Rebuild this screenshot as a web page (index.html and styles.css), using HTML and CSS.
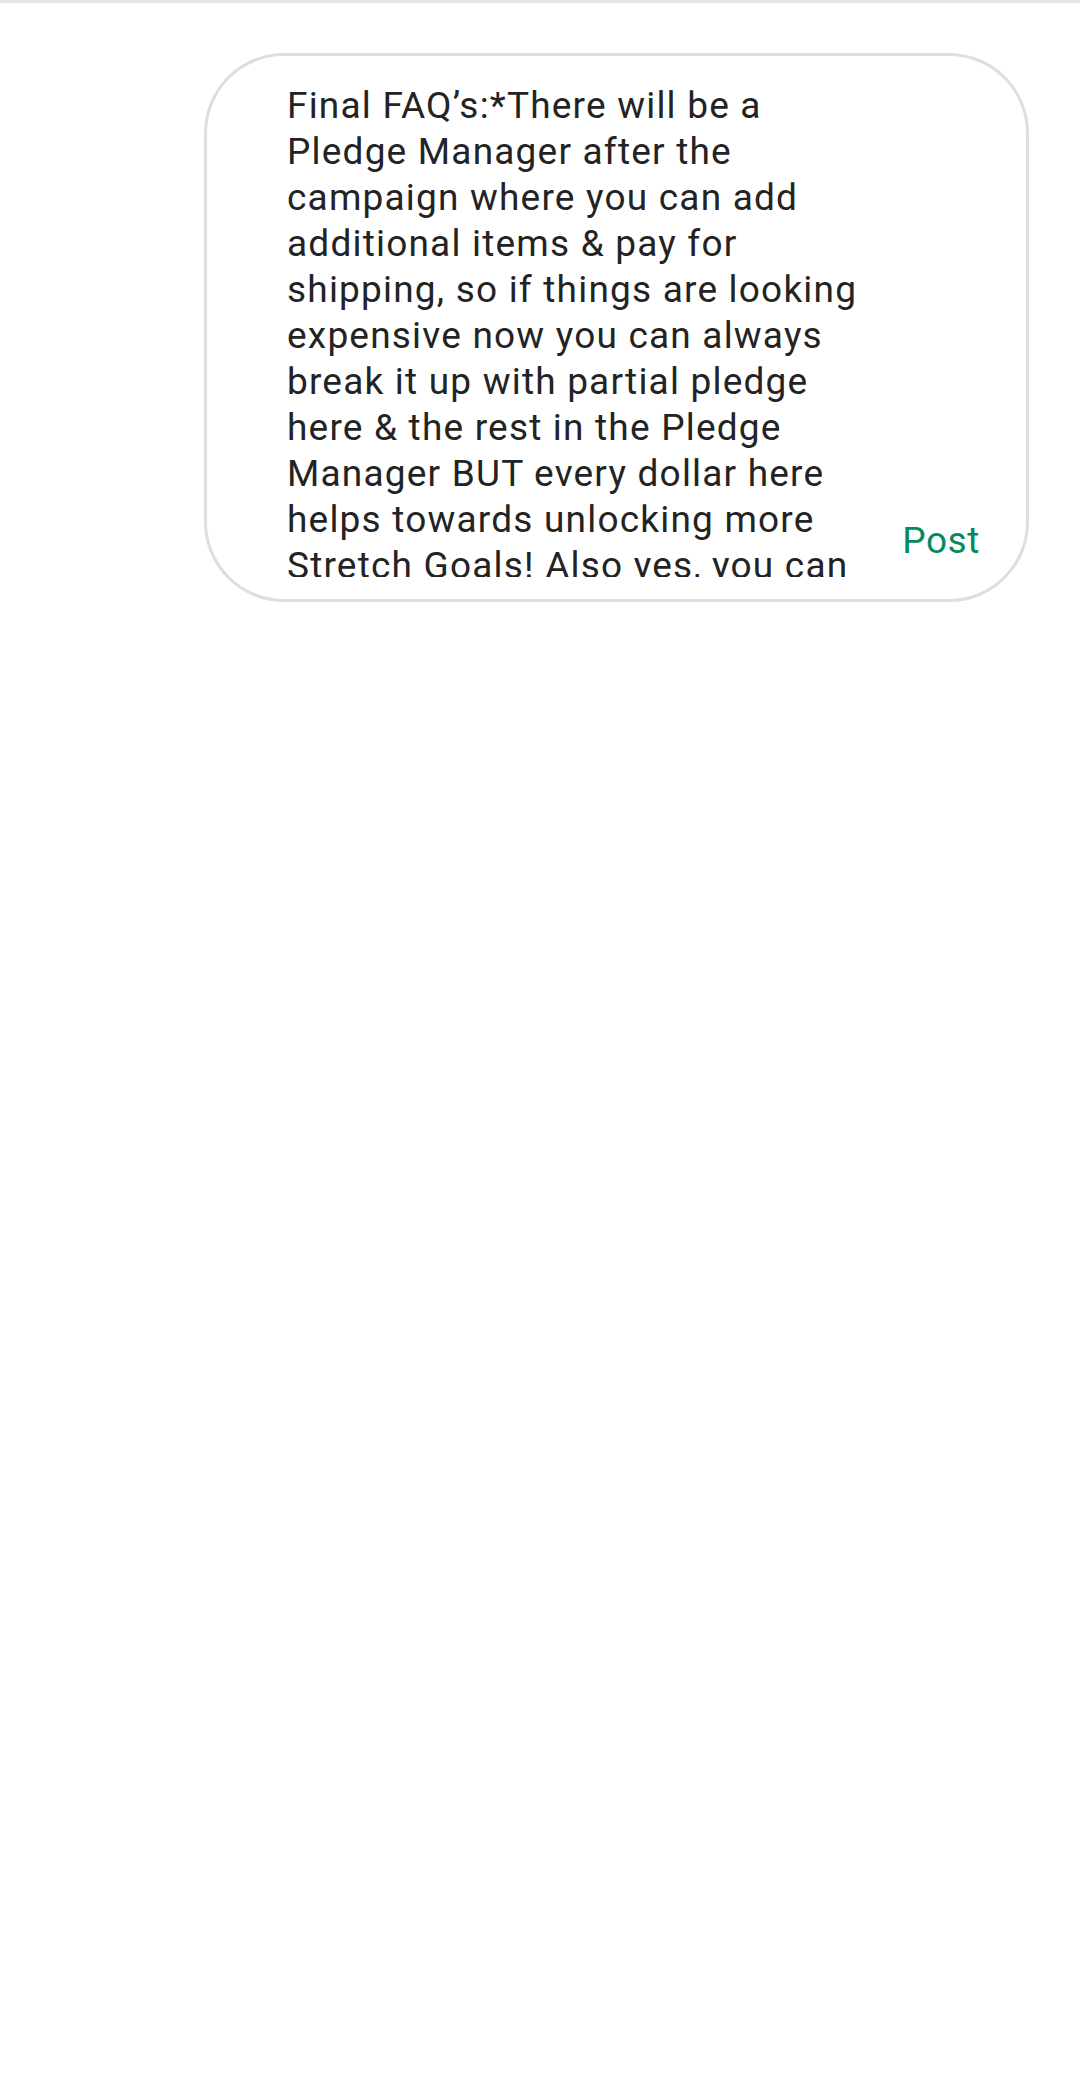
FILE: index.html
```html
<!DOCTYPE html>
<html>
<head>
<meta charset="utf-8">
<link rel="stylesheet" href="styles.css">
</head>
<body>
<div class="divider"></div>
<div class="composer-row">
  <div class="composer">
    <div class="input">Final FAQ’s:*There will be a Pledge Manager after the campaign where you can add additional items &amp; pay for shipping, so if things are looking expensive now you can always break it up with partial pledge here &amp; the rest in the Pledge Manager BUT every dollar here helps towards unlocking more Stretch Goals! Also yes, you can add more to your pledge later on.</div>
    <div class="post">Post</div>
  </div>
</div>
</body>
</html>
```
FILE: styles.css
```css
html, body {
  margin: 0;
  padding: 0;
  background: #ffffff;
}
body {
  width: 1080px;
  height: 2088px;
  font-family: Roboto, "Noto Sans", sans-serif;
}
.divider {
  height: 3px;
  background: #e6e6e6;
}
.composer-row {
  padding: 50px 51px 0 204px;
}
.composer {
  box-sizing: border-box;
  height: 549px;
  border: 3px solid #dedede;
  border-radius: 80px;
  display: flex;
  align-items: flex-end;
  padding: 27px 46px 35px 80px;
}
.input {
  align-self: flex-start;
  width: 586px;
  height: 494px;
  overflow: hidden;
  font-size: 37px;
  line-height: 46px;
  letter-spacing: 1.2px;
  color: #232323;
}
.post {
  margin-left: auto;
  font-size: 37px;
  line-height: 46px;
  letter-spacing: 0.6px;
  color: #058a5e;
}
```
